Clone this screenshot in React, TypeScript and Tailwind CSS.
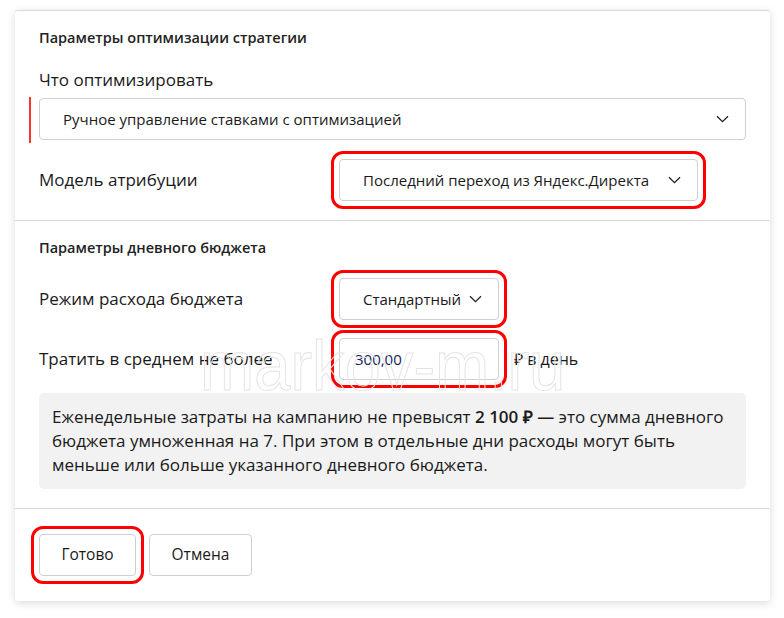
import React from 'react';

const FONT = "font-['Open_Sans','Liberation_Sans',sans-serif]";

/** Шеврон выпадающего списка. */
function Chevron() {
  return (
    <svg width="13" height="8" viewBox="0 0 13 8" fill="none" className="shrink-0">
      <path d="M1 1.2l5.5 5.4 5.5-5.4" stroke="#222" strokeWidth="1.3" />
    </svg>
  );
}

type SelectProps = {
  value: string;
  className?: string;
  marked?: boolean;
};

/** Кнопка-селект в стиле Директа. */
function Select({ value, className = '', marked = false }: SelectProps) {
  return (
    <div
      className={`h-[42px] bg-white border border-[#cfcfcf] rounded-[4px] flex items-center pl-[23px] pr-[16px] text-[15px] text-[#1a1a1a] ${
        marked ? 'outline-[3px] outline-solid outline-[#ff0000] outline-offset-[5px]' : ''
      } ${className}`}
    >
      <span className="flex-1 whitespace-nowrap">{value}</span>
      <Chevron />
    </div>
  );
}

export default function App() {
  return (
    <div className={`relative w-[784px] h-[618px] bg-white pt-[10px] pl-[15px] ${FONT}`}>
      <div className="w-[755px] bg-white rounded-[3px] border-t border-[#d9d9d9] shadow-[0_2px_9px_rgba(0,0,0,0.15)]">
        {/* Параметры оптимизации */}
        <section className="px-[24px] pt-[17px] pb-[19px]">
          <h3 className="text-[14.5px] leading-[20px] font-semibold text-[#222]">
            Параметры оптимизации стратегии
          </h3>
          <div className="mt-[20px] text-[17px] leading-[24px] text-[#1a1a1a]">Что оптимизировать</div>
          <div className="relative mt-[6px]">
            <span className="absolute -left-[10px] -top-[1px] w-[2px] h-[46px] bg-[#f33]" />
            <Select value="Ручное управление ставками с оптимизацией" className="text-[14.7px]" />
          </div>
          <div className="mt-[19px] flex items-center">
            <div className="w-[300px] text-[17px] text-[#1a1a1a]">Модель атрибуции</div>
            <Select value="Последний переход из Яндекс.Директа" className="w-[359px] gap-[18px]" marked />
          </div>
        </section>

        <div className="h-px bg-[#d9d9d9]" />

        {/* Параметры дневного бюджета */}
        <section className="px-[24px] pt-[17px] pb-[19px]">
          <h3 className="text-[14.5px] leading-[20px] font-semibold text-[#222]">
            Параметры дневного бюджета
          </h3>
          <div className="mt-[20px] flex items-center">
            <div className="w-[300px] text-[17px] text-[#1a1a1a]">Режим расхода бюджета</div>
            <Select value="Стандартный" className="w-[160px]" marked />
          </div>
          <div className="mt-[18px] flex items-center">
            <div className="w-[300px] text-[17px] text-[#1a1a1a]">Тратить в среднем не более</div>
            <div className="w-[160px] h-[42px] border border-[#cfcfcf] rounded-[4px] flex items-center pl-[15px] text-[15px] text-[#12235a] outline-[3px] outline-solid outline-[#ff0000] outline-offset-[5px]">
              300,00
            </div>
            <span className="ml-[15px] text-[16px] text-[#1a1a1a]">₽ в день</span>
          </div>
          <div className="mt-[13px] bg-[#f2f2f2] rounded-[5px] px-[13px] py-[12px] text-[17px] leading-[24px] text-[#1a1a1a] whitespace-nowrap">
            Еженедельные затраты на кампанию не превысят <b className="font-semibold">2 100 ₽ —</b> это сумма дневного
            <br />
            бюджета умноженная на 7. При этом в отдельные дни расходы могут быть
            <br />
            меньше или больше указанного дневного бюджета.
          </div>
        </section>

        <div className="h-px bg-[#d9d9d9]" />

        {/* Кнопки */}
        <section className="px-[24px] pt-[25px] pb-[25px] flex gap-[13px]">
          <button className="w-[97px] h-[42px] border border-[#cfcfcf] rounded-[4px] text-[15.5px] text-[#1a1a1a] outline-[3px] outline-solid outline-[#ff0000] outline-offset-[5px]">
            Готово
          </button>
          <button className="w-[103px] h-[42px] border border-[#cfcfcf] rounded-[4px] text-[15.5px] text-[#1a1a1a]">
            Отмена
          </button>
        </section>
      </div>

      {/* Водяной знак */}
      <div className="pointer-events-none absolute left-[200px] top-[331px] origin-left scale-x-[0.93] text-[70px] leading-none text-transparent [-webkit-text-stroke:1px_#e4e4e4] font-['Liberation_Sans',sans-serif]">
        markov-m.ru
      </div>
    </div>
  );
}
